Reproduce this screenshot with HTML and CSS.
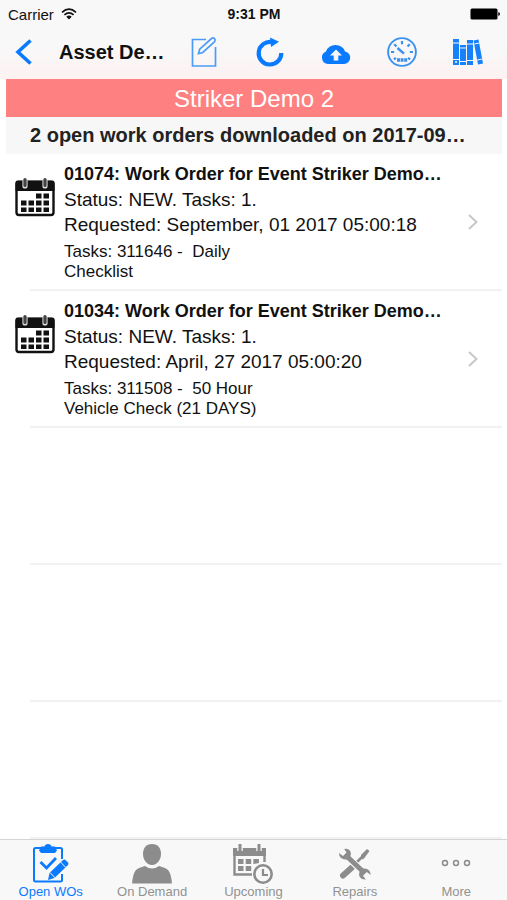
FILE: index.html
```html
<!DOCTYPE html>
<html lang="en">
<head>
<meta charset="utf-8">
<meta name="viewport" content="width=device-width, initial-scale=1">
<title>Asset Details</title>
<link rel="stylesheet" href="styles.css">
</head>
<body>
<svg class="sprite" aria-hidden="true">
  <symbol id="calendar" viewBox="0 0 40 40">
    <rect x="1.500" y="5" width="37" height="33" rx="2.500" fill="#fff" stroke="#111" stroke-width="2.400"/>
    <path d="M.5 14V5.500q0-2 2-2h35q2 0 2 2V14z" fill="#111"/>
    <path d="M10 4v5M30 4v5" stroke="#ddd" stroke-width="5.200" stroke-linecap="round"/>
    <path d="M10 2.500v6M30 2.500v6" stroke="#444" stroke-width="3.200" stroke-linecap="round"/>
    <path d="M21 16.500h5.500v5H21zm7.500 0H34v5h-5.500zM6 23.500h5.500v5H6zm7.500 0H19v5h-5.500zm7.500 0h5.500v5H21zm7.500 0H34v5h-5.500zM6 30.500h5.500v4.500H6zm7.500 0H19V35h-5.500zm7.500 0h5.500V35H21zm7.500 0H34V35h-5.500z" fill="#111"/>
  </symbol>
</svg>
<header class="top">
  <div class="status">
    <span class="carrier">Carrier
      <svg width="16" height="12" viewBox="0 0 16 12" fill="none" stroke="#111" stroke-width="1.700"><path d="M1 4.300Q8-2 15 4.300M3.400 6.800q4.600-4 9.200 0"/><path d="M5.300 8.700Q8 6.300 10.700 8.700L8 11.500z" fill="#111" stroke="none"/></svg>
    </span>
    <span class="clock">9:31 PM</span>
    <span class="battery"><svg width="30" height="12" viewBox="0 0 30 12"><rect x=".5" y=".5" width="27" height="11" rx="1.500"/><path d="M28.300 4q1.700.5 1.700 2t-1.700 2z"/></svg></span>
  </div>
  <nav class="bar">
    <button class="back" aria-label="Back"><svg width="18" height="26" viewBox="0 0 18 26" fill="none" stroke="#0a7bff" stroke-width="3.600"><path d="M15.500 1.500 3 13l12.500 11.500"/></svg></button>
    <h1>Asset De…</h1>
    <button aria-label="Edit"><svg width="26" height="32" viewBox="0 0 26 32" fill="none" stroke="#4b9cf8" stroke-width="1.700"><path d="M15 3.500H1.500V30h23V11"/><path d="m7.500 17.500 1.200-4.300L20.500 2.500q1.700-1.200 3 .2t.1 3L11.800 16.500z"/></svg></button>
    <button aria-label="Refresh"><svg width="28" height="30" viewBox="0 0 28 30"><path d="M16 5.100A11.300 11.300 0 1 0 25.300 16" fill="none" stroke="#0a7bff" stroke-width="4.200"/><path d="M14 .5 23 4.800 15 10z" fill="#0a7bff"/></svg></button>
    <button aria-label="Upload"><svg class="low" width="30" height="22" viewBox="0 0 30 22"><path d="M7 21a6.500 6.500 0 0 1-2-12.500A10 9.500 0 0 1 24 8.500 6.300 6.300 0 0 1 23 21z" fill="#0a7bff"/><path d="m15 6.500 6 6h-3.700v5h-4.600v-5H9z" fill="#f8f7f7"/></svg></button>
    <button aria-label="Meter"><svg width="30" height="30" viewBox="0 0 30 30" fill="none" stroke="#3c91f0"><circle cx="15" cy="15" r="13.900" stroke-width="1.900"/><path d="M15 4v3.200M4 15h3.200M26 15h-3.200M7.200 7.200l2.300 2.300M22.800 7.200l-2.300 2.300M7 22.500l1.800-1.800M23 22.500l-1.800-1.800" stroke-width="2.200"/><path d="m10.500 11 6.500 5.700" stroke-width="2.400"/><path d="M10 21.300h3v3.500h-3zm3.600 0h3v3.500h-3zm3.600 0h3v3.500h-3z" fill="#3c91f0" stroke="none"/></svg></button>
    <button aria-label="Library"><svg width="30" height="26" viewBox="0 0 30 26"><path d="M0 0h6v26H0zM7 6h6v20H7zM14 1h6v25h-6zM20.500 1.500l5-1L30 24.500l-5 1z" fill="#1681f8"/><path d="M0 4h6M0 20.500h6M7 9h6M7 22.500h6M14 5h6M14 21.500h6M21.300 5l5-1M24.300 21l5-1" stroke="#f8f7f7" stroke-width="1"/><circle cx="3" cy="23" r="1" fill="#f8f7f7"/></svg></button>
  </nav>
</header>
<main>
  <h2 class="asset">Striker Demo 2</h2>
  <p class="summary">2 open work orders downloaded on 2017-09…</p>
  <ul class="orders">
    <li><a class="order" href="#01074">
      <svg class="cal"><use href="#calendar"/></svg>
      <span class="info"><strong>01074: Work Order for Event Striker Demo…</strong><span>Status: NEW. Tasks: 1.</span><span>Requested: September, 01 2017 05:00:18</span><span class="tasks">Tasks: 311646 - &nbsp;Daily<br>Checklist</span></span>
      <svg class="chev" viewBox="0 0 10 16"><path d="m1 1 7.500 7L1 15"/></svg>
    </a></li>
    <li><a class="order" href="#01034">
      <svg class="cal"><use href="#calendar"/></svg>
      <span class="info"><strong>01034: Work Order for Event Striker Demo…</strong><span>Status: NEW. Tasks: 1.</span><span>Requested: April, 27 2017 05:00:20</span><span class="tasks">Tasks: 311508 - &nbsp;50 Hour<br>Vehicle Check (21 DAYS)</span></span>
      <svg class="chev" viewBox="0 0 10 16"><path d="m1 1 7.500 7L1 15"/></svg>
    </a></li>
    <li></li>
    <li></li>
    <li></li>
  </ul>
</main>
<nav class="tabs">
  <a class="on" href="#open"><svg width="38" height="40" viewBox="0 0 38 40"><path d="M9 4H3.500q-1.500 0-1.500 1.500V36q0 1.500 1.500 1.500h25q1.500 0 1.500-1.500v-6M23 4h5.500Q30 4 30 5.500V15" fill="none" stroke="#0a7bff" stroke-width="2"/><path d="M9 2.500h3.500q.5-2.500 3.500-2.500t3.500 2.500H23l2 4L23 9H9L7 6.500z" fill="#0a7bff"/><path d="m8.500 18 6 6 9.500-10" fill="none" stroke="#0a7bff" stroke-width="2.800"/><path d="m16 36 1.500-7 13.500-13q1.500-1 3 .5l2 2q1 1.300 0 2.500L22.500 34z" fill="#0a7bff"/><path d="m18 28.500 5 5.300M28.500 18l5.200 5.500" stroke="#f8f8f8" stroke-width="1"/></svg><span>Open WOs</span></a>
  <a href="#demand"><svg width="40" height="40" viewBox="0 0 40 40" fill="#8c8c8c"><path d="M20 0c6 0 9 4 9 10s-4 11-9 11-9-5-9-11 3-10 9-10zM0 39.500q1-10.500 4-13.500 2-2 9-4 7 5 14 0 7 2 9 4 3 3 4 13.500z"/></svg><span>On Demand</span></a>
  <a href="#upcoming"><svg width="40" height="40" viewBox="0 0 40 40"><path d="M1.500 5v25.500H19M31.500 5v13" fill="none" stroke="#8c8c8c" stroke-width="2.400"/><path d="M0 4h33v8H0z" fill="#8c8c8c"/><path d="M7 2v5M26 2v5" stroke="#f8f8f8" stroke-width="5.500"/><path d="M7 0v7M26 0v7" stroke="#8c8c8c" stroke-width="3"/><path d="M5 15h5.500v5H5zm7.700 0h5.500v5h-5.500zm7.700 0h5.500v4l-5.500 1zM5 22h5.500v5H5zm7.700 0h5.500v5h-5.500z" fill="#8c8c8c"/><circle cx="30" cy="30" r="8.700" fill="#f8f8f8" stroke="#8c8c8c" stroke-width="2.600"/><path d="M30 25v6h5" fill="none" stroke="#8c8c8c" stroke-width="2.200"/></svg><span>Upcoming</span></a>
  <a href="#repairs"><svg class="short" width="32" height="32" viewBox="0 0 32 32"><path d="m4 27.500 9.500-8.500" stroke="#8c8c8c" stroke-width="6" stroke-linecap="round"/><path d="m15 17 9-9" stroke="#8c8c8c" stroke-width="2.600"/><path d="m22 7 6-6 2.500 2-5.500 7.500q-2 1.500-3-.5z" fill="#8c8c8c"/><path d="M9 9.500 23 23" stroke="#f8f8f8" stroke-width="7"/><path d="M7 7.500 25 24.500" stroke="#8c8c8c" stroke-width="5"/><path d="M5.200 1q5-1 6.600 3.500.6 4-3 6.800-6 1-8.300-3.300L0 5l4 3 3.500-3.500zM26.800 31.500q-4.500.5-6.500-3.500-1-4 2.500-7.300 5.700-1 8.200 3l.8 3.300-4-3-3.800 3.800z" fill="#8c8c8c"/></svg><span>Repairs</span></a>
  <a href="#more"><svg class="dots" width="30" height="8" viewBox="0 0 30 8" fill="none" stroke="#8c8c8c" stroke-width="1.500"><circle cx="4" cy="4" r="2.500"/><circle cx="15" cy="4" r="2.500"/><circle cx="26" cy="4" r="2.500"/></svg><span>More</span></a>
</nav>
</body>
</html>
```
FILE: styles.css
```css
* { box-sizing: border-box; }
body {
  margin: 0;
  min-height: 100vh;
  display: flex;
  flex-direction: column;
  background: #fff;
  color: #111;
  font-family: "Liberation Sans", Arial, sans-serif;
}
h1, h2, p, ul { margin: 0; padding: 0; }
svg { display: block; flex: none; }
a { color: inherit; text-decoration: none; }
button { border: 0; padding: 0; background: none; }
.sprite { position: absolute; width: 0; height: 0; }
.top { background: linear-gradient(#f8f8f8 60%, #fdf2f2); }
.status {
  display: grid;
  grid-template-columns: 1fr auto 1fr;
  align-items: center;
  height: 28px;
  padding: 0 7px 0 8px;
  font-size: 14px;
}
.carrier { display: flex; align-items: center; gap: 7px; font-size: 15px; }
.clock { font-weight: bold; }
.battery { justify-self: end; }
.bar { display: flex; align-items: center; height: 51px; padding: 0 6px 4px 0; }
.bar button { width: 66px; height: 44px; display: flex; align-items: center; justify-content: center; }
.bar .back { width: 59px; padding-right: 11px; }
.bar .low { margin-top: 4px; }
.bar h1 { flex: 1; min-width: 0; padding-top: 2px; font-size: 20px; white-space: nowrap; }
main { flex: 1; padding: 0 5px 0 6px; }
.asset {
  background: #ff8080;
  color: #fff;
  font-size: 24px;
  font-weight: normal;
  line-height: 40px;
  height: 38px;
  text-align: center;
}
.summary {
  padding-left: 24px;
  background: #f7f7f7;
  color: #222;
  font-size: 20px;
  font-weight: bold;
  line-height: 37px;
  white-space: nowrap;
}
.orders { list-style: none; }
.orders li { height: 137px; position: relative; }
.orders li::after {
  content: "";
  position: absolute;
  left: 24px;
  right: 0;
  bottom: 0;
  height: 2px;
  background: #f2f2f2;
}
.order { display: flex; padding: 8px 24px 0 9px; }
.cal { width: 40px; height: 40px; margin-top: 15px; }
.info { flex: 1; min-width: 0; margin-left: 9px; font-size: 19px; line-height: 25px; white-space: nowrap; }
.info > * { display: block; }
.info strong { font-size: 18px; }
.info .tasks { margin-top: 5px; font-size: 17px; line-height: 20px; }
.chev { width: 10px; height: 16px; margin-top: 52px; fill: none; stroke: #c7c7cc; stroke-width: 2px; }
.tabs {
  display: grid;
  grid-template-columns: repeat(5, 1fr);
  height: 61px;
  border-top: 1px solid #d4d4d4;
  background: #f8f8f8;
  color: #929292;
  font-size: 13px;
  line-height: 16px;
}
.tabs a { display: flex; flex-direction: column; align-items: center; justify-content: space-between; padding-top: 4px; }
.tabs .short { margin-top: 4px; }
.tabs .dots { margin-top: 15px; }
.tabs .on { color: #0a7bff; }
```
